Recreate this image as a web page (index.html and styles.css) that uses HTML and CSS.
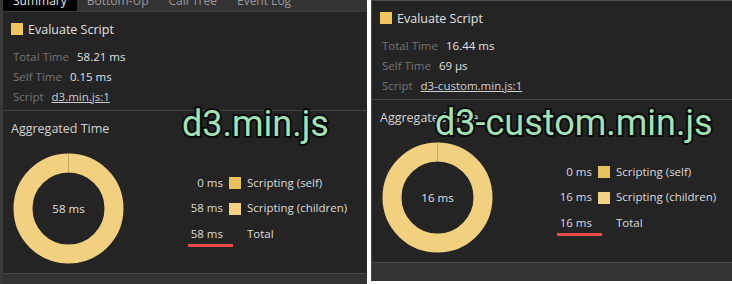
FILE: index.html
```html
<!DOCTYPE html>
<html>
<head>
<meta charset="utf-8">
<link rel="stylesheet" href="styles.css">
</head>
<body>
<div class="page">
  <section class="panel panel-left">
    <div class="tabs">
      <div class="tab active">Summary</div>
      <div class="tab">Bottom-Up</div>
      <div class="tab">Call Tree</div>
      <div class="tab">Event Log</div>
    </div>
    <div class="summary">
      <div class="title"><span class="sq sq-title"></span>Evaluate Script</div>
      <div class="row"><span class="lbl">Total Time</span><span class="val">58.21 ms</span></div>
      <div class="row"><span class="lbl">Self Time</span><span class="val">0.15 ms</span></div>
      <div class="row"><span class="lbl">Script</span><span class="link">d3.min.js:1</span></div>
    </div>
    <div class="agg">
      <div class="agg-title">Aggregated Time</div>
      <div class="agg-body">
        <div class="donut">
          <svg width="111" height="111" viewBox="0 0 111 111">
            <circle cx="55.5" cy="55.5" r="45.5" fill="none" stroke="#f1d080" stroke-width="19"/>
            <line x1="55.5" y1="0" x2="55.5" y2="19" stroke="#b89a58" stroke-width="0.8"/>
          </svg>
          <span class="donut-label">58 ms</span>
        </div>
        <div class="legend">
          <span class="lv">0 ms</span><span class="sq sq-self"></span><span class="ll">Scripting (self)</span>
          <span class="lv">58 ms</span><span class="sq sq-child"></span><span class="ll">Scripting (children)</span>
          <span class="lv total">58 ms<i class="underline"></i></span><span></span><span class="ll">Total</span>
        </div>
      </div>
    </div>
    <div class="footer"></div>
    <div class="caption caption-left">d3.min.js</div>
  </section>

  <section class="panel panel-right">
    <div class="summary">
      <div class="title"><span class="sq sq-title"></span>Evaluate Script</div>
      <div class="row"><span class="lbl">Total Time</span><span class="val">16.44 ms</span></div>
      <div class="row"><span class="lbl">Self Time</span><span class="val">69 µs</span></div>
      <div class="row"><span class="lbl">Script</span><span class="link">d3-custom.min.js:1</span></div>
    </div>
    <div class="agg">
      <div class="agg-title">Aggregated Time</div>
      <div class="agg-body">
        <div class="donut">
          <svg width="111" height="111" viewBox="0 0 111 111">
            <circle cx="55.5" cy="55.5" r="45.5" fill="none" stroke="#f1d080" stroke-width="19"/>
            <line x1="55.5" y1="0" x2="55.5" y2="19" stroke="#b89a58" stroke-width="0.8"/>
          </svg>
          <span class="donut-label">16 ms</span>
        </div>
        <div class="legend">
          <span class="lv">0 ms</span><span class="sq sq-self"></span><span class="ll">Scripting (self)</span>
          <span class="lv">16 ms</span><span class="sq sq-child"></span><span class="ll">Scripting (children)</span>
          <span class="lv total">16 ms<i class="underline"></i></span><span></span><span class="ll">Total</span>
        </div>
      </div>
    </div>
    <div class="footer"></div>
    <div class="caption caption-right">d3-custom.min.js</div>
  </section>
</div>
</body>
</html>
```

FILE: styles.css
```css
* { box-sizing: border-box; }
html, body { margin: 0; padding: 0; background: #ffffff; }
body {
  width: 732px;
  height: 284px;
  overflow: hidden;
  font-family: "Open Sans", "Noto Sans", sans-serif;
  font-size: 11.5px;
  color: #dcdcdc;
}
.page {
  display: flex;
  gap: 4px;
  height: 284px;
  align-items: flex-start;
}
.panel {
  position: relative;
  background: #242424;
  display: flex;
  flex-direction: column;
}
.panel-left {
  width: 367px;
  height: 284px;
  border-left: 3px solid #3a3a3a;
}
.panel-right {
  width: 361px;
  height: 281px;
  border-left: 1px solid #4a4a4a;
  border-top: 1px solid #4a4a4a;
}

/* tabs */
.tabs {
  height: 12px;
  background: #333333;
  border-bottom: 1px solid #3d3d3d;
  display: flex;
  overflow: hidden;
  color: #9a9a9a;
  font-size: 12px;
}
.tab {
  padding: 0 10px;
  line-height: 16px;
  margin-top: -7px;
  height: 24px;
}
.tab.active {
  background: #000000;
  color: #e6e6e6;
}

/* summary block */
.summary {
  padding: 8px 0 4px 8px;
  border-bottom: 1px solid #444444;
}
.title {
  display: flex;
  align-items: center;
  gap: 5px;
  height: 18px;
  font-size: 12.5px;
  color: #e2e2e2;
  margin-bottom: 8px;
}
.row {
  height: 20px;
  display: flex;
  align-items: center;
  padding-left: 2px;
}
.lbl { color: #757575; margin-right: 8px; }
.val { color: #e0e0e0; }
.link { color: #d0d0d0; text-decoration: underline; }

.sq {
  display: inline-block;
  width: 12px;
  height: 12px;
}
.sq-title { background: #efc55e; }
.sq-self { background: #e9c25c; }
.sq-child { background: #f3d283; }

/* aggregated */
.agg {
  padding: 9px 0 9px 8px;
}
.agg-title {
  height: 18px;
  line-height: 18px;
  font-size: 12.5px;
  color: #d2d2d2;
  margin-bottom: 15px;
}
.agg-body {
  display: flex;
  align-items: center;
}
.donut {
  position: relative;
  width: 111px;
  height: 111px;
  margin-left: 2px;
}
.donut svg { display: block; }
.donut-label {
  position: absolute;
  inset: 0;
  display: flex;
  align-items: center;
  justify-content: center;
  color: #e0e0e0;
}
.legend {
  margin-left: 59px;
  display: grid;
  grid-template-columns: 40px 12px auto;
  column-gap: 6px;
  row-gap: 7px;
  align-items: center;
  line-height: 18.5px;
}
.lv { text-align: right; color: #dcdcdc; }
.ll { color: #dcdcdc; }
.total { position: relative; }
.underline {
  position: absolute;
  left: 5px;
  top: 19px;
  width: 45px;
  height: 3px;
  background: #ec4b4b;
}

.footer {
  flex: 1;
  background: #333333;
  border-top: 1px solid #4a4a4a;
}

/* overlay captions */
.caption {
  position: absolute;
  font-family: Roboto, "Liberation Sans", sans-serif;
  font-size: 36px;
  line-height: 36px;
  color: #a3e2b5;
  -webkit-text-stroke: 4px #0b0b0b;
  paint-order: stroke fill;
  white-space: nowrap;
}
.caption-left { left: 179px; top: 106px; }
.caption-right { left: 63px; top: 104px; }
```
